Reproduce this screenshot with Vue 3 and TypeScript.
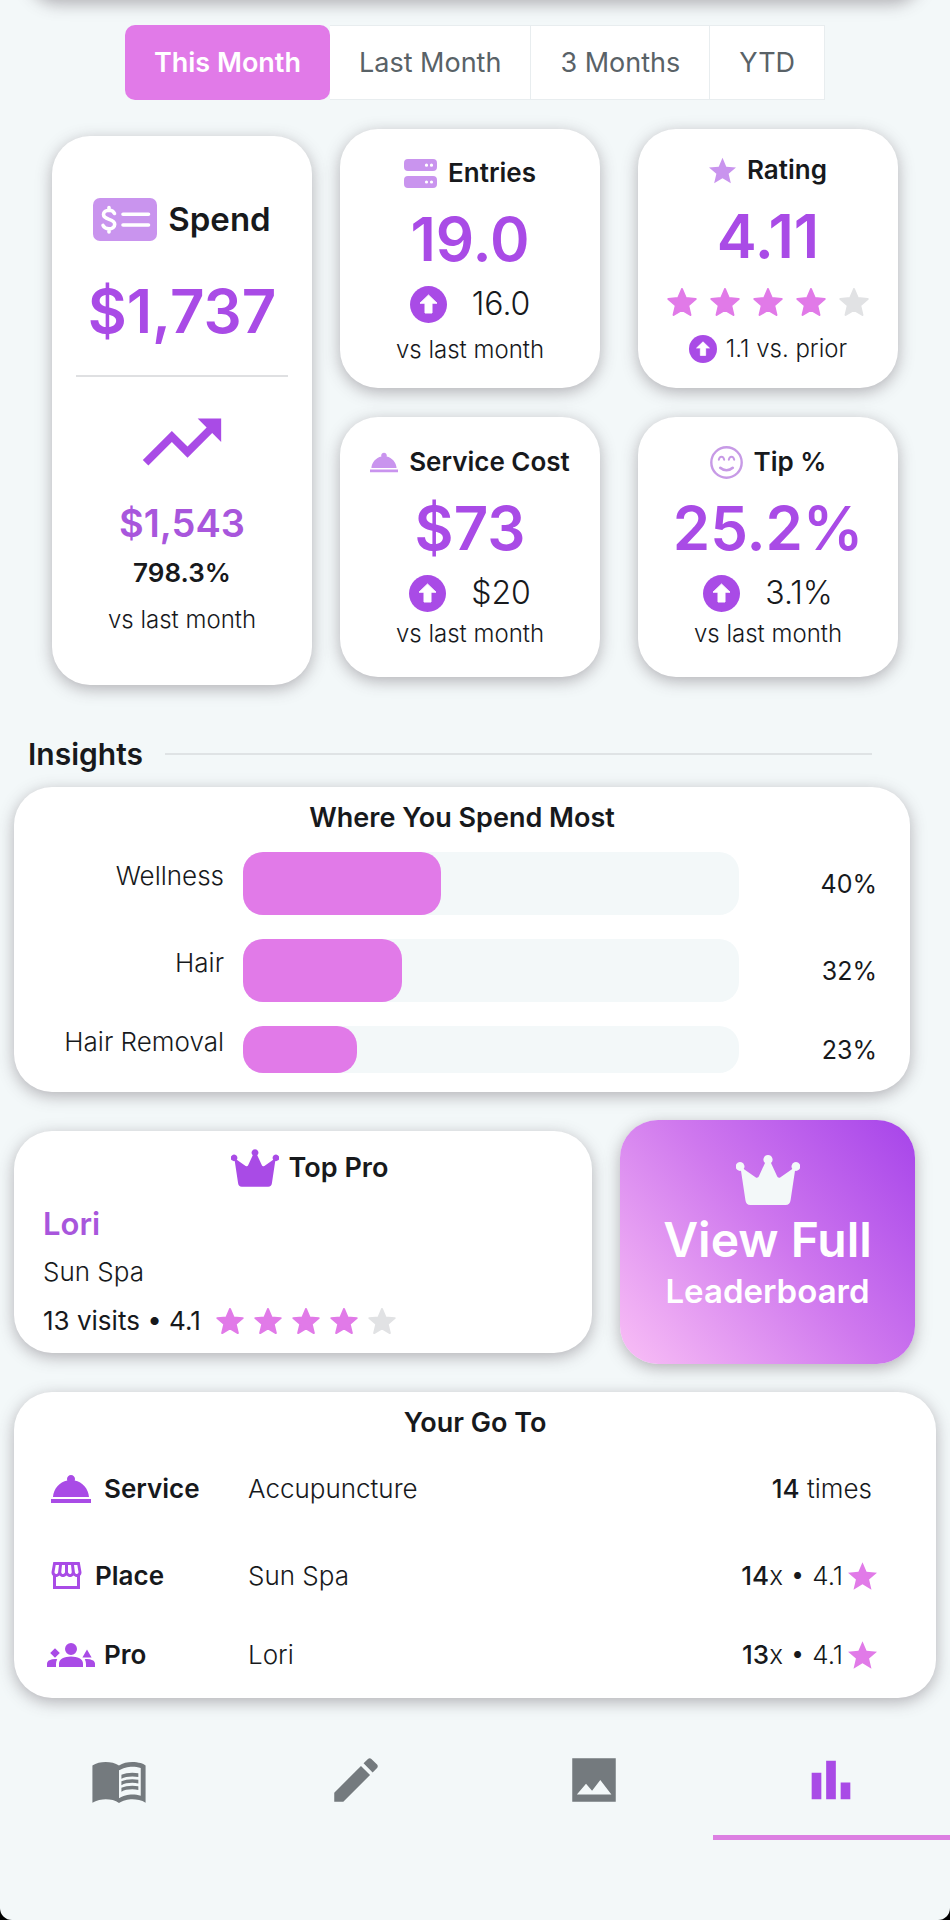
<script setup lang="ts">
import { ref } from 'vue'

interface Glyph {
  box: string
  d: string
}

interface Tile {
  id: string
  title: string
  icon: string
  value: string
  delta: string
  note: string
  stars?: number
}

const cloche =
  'M2 17h20v2H2v-2zm11.84-9.21c.1-.24.16-.51.16-.79 0-1.1-.9-2-2-2s-2 .9-2 2c0 .28.06.55.16.79C6.25 8.6 3.27 11.93 3 16h18c-.27-4.07-3.25-7.4-7.16-8.21z'
const starPath =
  'M12 17.27L18.18 21l-1.64-7.03L22 9.24l-7.19-.61L12 2 9.19 8.63 2 9.24l5.46 4.73L5.82 21z'

const glyphs: Record<string, Glyph> = {
  entries: {
    box: '0 0 33 29',
    d: 'M4 0h25a4 4 0 0 1 4 4v4a4 4 0 0 1-4 4H4a4 4 0 0 1-4-4V4a4 4 0 0 1 4-4zM22.500 4.600a1.600 1.600 0 1 0 0 3.200 1.600 1.600 0 0 0 0-3.200zM27.500 4.600a1.600 1.600 0 1 0 0 3.200 1.600 1.600 0 0 0 0-3.200zM4 17h25a4 4 0 0 1 4 4v4a4 4 0 0 1-4 4H4a4 4 0 0 1-4-4v-4a4 4 0 0 1 4-4zM22.500 21.400a1.600 1.600 0 1 0 0 3.200 1.600 1.600 0 0 0 0-3.200zM27.500 21.400a1.600 1.600 0 1 0 0 3.200 1.600 1.600 0 0 0 0-3.200z',
  },
  rating: { box: '2 2 20 19', d: starPath },
  cost: { box: '2 4.500 20 15', d: cloche },
  service: { box: '0 0 24 24', d: cloche },
  place: {
    box: '-1 -1 26 26',
    d: 'M3.200 3h17.600l1.200 6.800c0 1-.300 1.700-1 2.300V21H3v-8.900c-.700-.600-1-1.300-1-2.300zM4.800 5L4 9.700c0 .8.500 1.300 1.100 1.300.700 0 1.200-.5 1.300-1.200L7 5zM9 5l-.500 4.600c0 .8.500 1.400 1.200 1.400s1.300-.6 1.300-1.300V5zM13 5v4.700c0 .7.600 1.300 1.300 1.300s1.200-.6 1.200-1.400L15 5zM17 5l.600 4.800c.1.700.6 1.200 1.300 1.200.6 0 1.100-.5 1.100-1.300L19.200 5zM5 13v6h14v-6c-.900 0-1.700-.4-2.300-1-.6.600-1.400 1-2.300 1-1 0-1.800-.4-2.400-1-.6.600-1.400 1-2.400 1-.9 0-1.700-.4-2.300-1-.6.600-1.400 1-2.300 1z',
  },
  pro: {
    box: '0 0 24 24',
    d: 'M12 12.750c1.630 0 3.070.390 4.240.900 1.080.480 1.760 1.560 1.760 2.730V18H6v-1.610c0-1.180.680-2.260 1.760-2.730 1.170-.520 2.610-.910 4.240-.910zM12 6a3 3 0 1 1 0 6 3 3 0 0 1 0-6zM4 8.600l2.400 2.400L4 13.400 1.600 11zM20 9.300l2.300 3.900h-4.600zM1.220 14.580C.480 14.900 0 15.620 0 16.430V18h4.500v-1.610c0-.830.230-1.610.630-2.290C4.760 14.040 4.390 14 4 14c-.990 0-1.930.210-2.780.580zM22.780 14.580C21.930 14.210 20.990 14 20 14c-.390 0-.760.040-1.130.100.400.680.630 1.460.630 2.290V18H24v-1.570c0-.810-.480-1.530-1.220-1.850z',
  },
  crown: {
    box: '0 0 64 50',
    d: 'M32 0a4.500 4.500 0 0 1 3 7.900l6 13.200c.7 1.600 2 2.100 3.500 1.100L56.300 14a4.400 4.400 0 1 1 2.700 1.800L54.600 45c-.5 3.400-2 5-5 5H14.400c-3 0-4.500-1.600-5-5L5 15.800A4.400 4.400 0 1 1 7.700 14l11.800 8.200c1.500 1 2.800.5 3.500-1.100l6-13.200A4.500 4.500 0 0 1 32 0z',
  },
  trend: {
    box: '0 0 24 24',
    d: 'M16 6l2.290 2.290-4.880 4.880-4-4L2 16.590 3.410 18l6-6 4 4 6.300-6.290L22 12V6z',
  },
  book: {
    box: '0 0 24 24',
    d: 'M21 5c-1.110-.350-2.330-.500-3.500-.500-1.950 0-4.050.400-5.500 1.500-1.450-1.100-3.550-1.500-5.500-1.500S2.450 4.900 1 6v15.400C2.500 20.450 5.050 20 6.500 20c1.950 0 4.050.400 5.500 1.500 1.350-.850 3.800-1.500 5.500-1.500 1.650 0 4 .400 5.500 1.400V6c-.600-.450-1.250-.750-2-1zm0 13.500c-1.100-.350-2.300-.500-3.500-.500-1.700 0-4.150.650-5.500 1.500V8c1.350-.850 3.800-1.500 5.500-1.500 1.200 0 2.400.150 3.500.500v11.500zM17.500 10.500c.880 0 1.730.090 2.500.260V9.240c-.790-.150-1.640-.240-2.500-.240-1.700 0-3.240.290-4.500.830v1.660c1.130-.640 2.700-.990 4.500-.990zM13 12.490v1.660c1.130-.640 2.700-.990 4.500-.990.880 0 1.730.090 2.500.260V11.900c-.790-.150-1.640-.240-2.500-.240-1.700 0-3.240.300-4.500.830zM17.500 14.330c-1.700 0-3.240.290-4.500.830v1.660c1.130-.640 2.700-.990 4.500-.990.880 0 1.730.090 2.500.260v-1.520c-.790-.160-1.640-.240-2.500-.240z',
  },
  pencil: {
    box: '0 0 24 24',
    d: 'M3 17.250V21h3.750L17.810 9.940l-3.750-3.750L3 17.250zM20.710 7.040c.390-.390.390-1.020 0-1.410l-2.340-2.340c-.390-.390-1.020-.390-1.410 0l-1.830 1.830 3.750 3.750 1.830-1.830z',
  },
  photo: {
    box: '0 0 24 24',
    d: 'M3 3h18v18H3zM4.900 18h14.300L14.600 12l-3.400 4.400-2.500-2.900z',
  },
  chart: { box: '0 0 24 24', d: 'M4 9h4v11H4zM10 4h4v16h-4zM16 13h4v7h-4z' },
}

const periods = ['This Month', 'Last Month', '3 Months', 'YTD']
const period = ref('This Month')

const tiles: Tile[] = [
  { id: 'entries', title: 'Entries', icon: 'entries', value: '19.0', delta: '16.0', note: 'vs last month' },
  { id: 'rating', title: 'Rating', icon: 'rating', value: '4.11', delta: '', note: '1.1 vs. prior', stars: 4 },
  { id: 'cost', title: 'Service Cost', icon: 'cost', value: '$73', delta: '$20', note: 'vs last month' },
  { id: 'tip', title: 'Tip %', icon: 'tip', value: '25.2%', delta: '3.1%', note: 'vs last month' },
]

const spending = [
  { label: 'Wellness', share: 40 },
  { label: 'Hair', share: 32 },
  { label: 'Hair Removal', share: 23 },
]

const favourites = [
  { icon: 'service', label: 'Service', name: 'Accupuncture', count: '14', unit: ' times', rating: '' },
  { icon: 'place', label: 'Place', name: 'Sun Spa', count: '14', unit: 'x', rating: '4.1' },
  { icon: 'pro', label: 'Pro', name: 'Lori', count: '13', unit: 'x', rating: '4.1' },
]

const sections = [
  { id: 'book', label: 'Journal' },
  { id: 'pencil', label: 'New entry' },
  { id: 'photo', label: 'Gallery' },
  { id: 'chart', label: 'Statistics' },
]
</script>

<template>
  <div class="page">
    <div class="previous-card" aria-hidden="true"></div>

    <div class="periods" role="group" aria-label="Period">
      <button
        v-for="p in periods"
        :key="p"
        type="button"
        class="period"
        :class="{ active: p === period }"
        :aria-pressed="p === period"
        @click="period = p"
      >{{ p }}</button>
    </div>

    <main>
      <section class="metrics" aria-label="Summary">
        <article class="card spend">
          <h2 class="tile-title spend-title">
            <svg class="check-icon" viewBox="0 0 64 43" aria-hidden="true">
              <rect width="64" height="43" rx="7" fill="#c994ee" />
              <g fill="none" stroke="#fff" stroke-width="3.600" stroke-linecap="round">
                <path d="M21.500 15.500c-1-2.200-3-3.200-5.500-3.200-3.200 0-5.500 1.600-5.500 4.300 0 6 11.200 3.600 11.200 9.600 0 2.800-2.400 4.600-5.700 4.600-3 0-5-1.100-6-3.400M16 9.500v3M16 31v3M30 16.300h25.500M30 27h25.500" />
              </g>
            </svg>
            Spend
          </h2>
          <p class="value">$1,737</p>
          <hr class="divider" />
          <svg class="trend-icon" :viewBox="glyphs.trend.box" aria-hidden="true">
            <path :d="glyphs.trend.d" />
          </svg>
          <p class="gain">$1,543</p>
          <p class="gain-rate">798.3%</p>
          <p class="note">vs last month</p>
        </article>

        <div class="tiles">
          <article v-for="t in tiles" :key="t.id" class="card tile" :class="t.id">
            <h2 class="tile-title">
              <svg v-if="t.icon === 'tip'" class="title-icon" viewBox="0 0 33 33" aria-hidden="true">
                <g fill="none" stroke="#c79ae6" stroke-linecap="round">
                  <circle cx="16.500" cy="16.500" r="15.200" stroke-width="2.400" />
                  <path stroke-width="2" d="M8.800 13.800c.8-4 4.600-4 5.400 0M18.800 13.800c.8-4 4.600-4 5.400 0" />
                  <path stroke-width="2.600" d="M10.200 21.800c3.600 3.200 9 3.200 12.600 0" />
                </g>
              </svg>
              <svg v-else class="title-icon" :viewBox="glyphs[t.icon].box" aria-hidden="true">
                <path :d="glyphs[t.icon].d" fill-rule="evenodd" />
              </svg>
              {{ t.title }}
            </h2>
            <p class="value">{{ t.value }}</p>
            <div v-if="t.stars" class="stars" role="img" :aria-label="`${t.stars} of 5 stars`">
              <svg v-for="n in 5" :key="n" class="star" :class="{ off: n > t.stars }" viewBox="1 1 22 21">
                <path :d="starPath" />
              </svg>
            </div>
            <p v-if="t.delta" class="delta">
              <svg class="up-icon" viewBox="0 0 37 37" aria-hidden="true">
                <circle cx="18.500" cy="18.500" r="18.500" />
                <path d="M18.500 9L27 17.200h-5V27h-7v-9.800h-5z" />
              </svg>
              {{ t.delta }}
            </p>
            <p class="note">
              <svg v-if="!t.delta" class="up-icon" viewBox="0 0 37 37" aria-hidden="true">
                <circle cx="18.500" cy="18.500" r="18.500" />
                <path d="M18.500 9L27 17.200h-5V27h-7v-9.800h-5z" />
              </svg>
              {{ t.note }}
            </p>
          </article>
        </div>
      </section>

      <div class="section-head">
        <h2>Insights</h2>
        <hr />
      </div>

      <section class="card spending">
        <h3 class="card-title">Where You Spend Most</h3>
        <ul class="bars">
          <li v-for="s in spending" :key="s.label" class="bar-row">
            <span class="bar-label">{{ s.label }}</span>
            <span class="track"><span class="fill" :style="{ width: s.share + '%' }"></span></span>
            <span class="bar-share">{{ s.share }}%</span>
          </li>
        </ul>
      </section>

      <div class="pair">
        <section class="card top-pro">
          <h3 class="card-title pro-title">
            <svg class="crown" :viewBox="glyphs.crown.box" aria-hidden="true">
              <path :d="glyphs.crown.d" />
            </svg>
            Top Pro
          </h3>
          <p class="pro-name">Lori</p>
          <p class="pro-place">Sun Spa</p>
          <div class="pro-stats">
            <span>13 visits • 4.1</span>
            <span class="stars" role="img" aria-label="4 of 5 stars">
              <svg v-for="n in 5" :key="n" class="star" :class="{ off: n > 4 }" viewBox="1 1 22 21">
                <path :d="starPath" />
              </svg>
            </span>
          </div>
        </section>

        <a class="leaderboard" href="#leaderboard">
          <svg class="crown" :viewBox="glyphs.crown.box" aria-hidden="true">
            <path :d="glyphs.crown.d" />
          </svg>
          <span class="lead-top">View Full</span>
          <span class="lead-bottom">Leaderboard</span>
        </a>
      </div>

      <section class="card go-to">
        <h3 id="go-to-title" class="card-title">Your Go To</h3>
        <table aria-labelledby="go-to-title">
          <tbody>
            <tr v-for="f in favourites" :key="f.label">
              <th scope="row">
                <span class="row-label">
                  <svg :class="['row-icon', f.icon]" :viewBox="glyphs[f.icon].box" aria-hidden="true">
                    <path :d="glyphs[f.icon].d" fill-rule="evenodd" />
                  </svg>
                  {{ f.label }}
                </span>
              </th>
              <td>{{ f.name }}</td>
              <td class="count" :class="{ rated: f.rating }">
                <span class="count-line">
                  <span><b>{{ f.count }}</b>{{ f.unit }}<template v-if="f.rating"> • {{ f.rating }}</template></span>
                  <svg v-if="f.rating" class="row-star" viewBox="2 2 20 19" aria-hidden="true">
                    <path :d="starPath" />
                  </svg>
                </span>
              </td>
            </tr>
          </tbody>
        </table>
      </section>
    </main>

    <nav class="tabbar" aria-label="Main">
      <a
        v-for="s in sections"
        :key="s.id"
        :href="'#' + s.id"
        class="tab"
        :class="{ current: s.id === 'chart' }"
        :aria-label="s.label"
      >
        <svg :viewBox="glyphs[s.id].box" aria-hidden="true">
          <path :d="glyphs[s.id].d" fill-rule="evenodd" />
        </svg>
      </a>
    </nav>
  </div>
</template>

<style>
html {
  background: #000;
}
</style>

<style scoped>
.page {
  box-sizing: border-box;
  min-height: 100vh;
  overflow: hidden;
  background: #f3f8f9;
  border-radius: 0 0 12px 12px;
  color: #17191c;
  font-family: Inter, "Liberation Sans", sans-serif;
  font-size: 26px;
  font-weight: 300;
  line-height: 32px;
}

h2,
h3,
p,
ul,
hr {
  margin: 0;
  padding: 0;
}

svg {
  display: block;
  flex: none;
}

.card,
.leaderboard,
.previous-card {
  border-radius: 38px;
  background: #fff;
  box-shadow: 0 4px 16px rgba(70, 60, 70, 0.38);
}

.previous-card {
  height: 60px;
  margin: -60px 28px 25px;
}

.periods {
  display: flex;
  width: fit-content;
  margin: 0 auto;
}

.period {
  box-sizing: border-box;
  height: 75px;
  padding: 0 29px;
  border: 1px solid #e8edef;
  border-left-width: 0;
  background: #fff;
  color: #596267;
  font: 400 27px/34px Inter, "Liberation Sans", sans-serif;
  cursor: pointer;
}

.period.active {
  border: 0;
  border-radius: 10px;
  background: #e17ae8;
  color: #fff;
  font-weight: 600;
}

.metrics {
  display: grid;
  grid-template-columns: 260fr 558fr;
  align-items: start;
  gap: 28px;
  margin: 29px 52px 0;
}

.tiles {
  display: grid;
  grid-template-columns: 1fr 1fr;
  gap: 29px 38px;
}

.spend,
.tile {
  box-sizing: border-box;
  display: flex;
  flex-direction: column;
  align-items: center;
}

.spend {
  margin-top: 7px;
  padding: 61px 24px 50px;
}

.tile-title {
  display: flex;
  align-items: center;
  gap: 11px;
  font-size: 26px;
  font-weight: 600;
  line-height: 34px;
  white-space: nowrap;
}

.title-icon {
  width: 33px;
  height: 33px;
  fill: #c994ee;
}

.rating .title-icon {
  width: 27px;
}

.cost .title-icon {
  width: 28px;
}

.spend-title {
  font-size: 33px;
  line-height: 44px;
}

.check-icon {
  width: 64px;
  height: 43px;
}

.value {
  margin-top: 13px;
  color: #a94be6;
  font-size: 60px;
  font-weight: 600;
  line-height: 72px;
}

.spend .value {
  margin-top: 34px;
}

.divider {
  width: 100%;
  height: 2px;
  margin-top: 28px;
  border: 0;
  background: #dfe0e2;
}

.trend-icon {
  width: 94px;
  height: 94px;
  margin-top: 18px;
  fill: #a94be6;
}

.gain {
  margin-top: 10px;
  color: #a856dc;
  font-size: 38px;
  font-weight: 600;
  line-height: 48px;
}

.gain-rate {
  margin-top: 9px;
  font-size: 26px;
  font-weight: 600;
  line-height: 34px;
}

.note {
  display: flex;
  align-items: center;
  gap: 9px;
  font-size: 24px;
  line-height: 30px;
}

.spend .note {
  margin-top: 15px;
}

.delta {
  display: flex;
  align-items: center;
  gap: 25px;
  margin-top: 10px;
  font-size: 32px;
  line-height: 38px;
}

.up-icon {
  width: 37px;
  height: 37px;
}

.up-icon circle {
  fill: #a94be6;
}

.up-icon path {
  fill: #fff;
  stroke: #fff;
  stroke-width: 1;
  stroke-linejoin: round;
}

.note .up-icon {
  width: 28px;
  height: 28px;
}

.entries {
  padding: 27px 0 23px;
}

.entries .note {
  margin-top: 12px;
}

.rating {
  padding: 24px 0 24px;
}

.rating .note {
  margin-top: 17px;
}

.cost,
.tip {
  padding: 28px 0 28px;
}

.cost .note,
.tip .note {
  margin-top: 7px;
}

.stars {
  display: flex;
  gap: 13px;
}

.tile .stars {
  margin-top: 15px;
}

.star {
  width: 30px;
  height: 30px;
  fill: #e17ae8;
  stroke: #e17ae8;
  stroke-width: 1.5;
  stroke-linejoin: round;
}

.star.off {
  fill: #e1e2e4;
  stroke: #e1e2e4;
}

.section-head {
  display: flex;
  align-items: center;
  gap: 22px;
  margin: 49px 78px 0 28px;
}

.section-head h2 {
  font-size: 30px;
  font-weight: 600;
  line-height: 40px;
}

.section-head hr {
  flex: 1;
  height: 2px;
  border: 0;
  background: #dfe3e5;
}

.card-title {
  font-size: 27px;
  font-weight: 600;
  line-height: 34px;
  text-align: center;
}

.spending {
  margin: 13px 40px 0 14px;
  padding: 14px 0 19px;
}

.bars {
  display: grid;
  gap: 24px;
  margin-top: 17px;
  padding-right: 33px;
  list-style: none;
}

.bar-row {
  display: grid;
  grid-template-columns: 210px 1fr 119px;
  align-items: center;
  gap: 19px;
  height: 63px;
}

.bar-row:last-child {
  height: 47px;
}

.bar-label {
  padding-bottom: 16px;
  text-align: right;
  line-height: 28px;
}

.track {
  align-self: stretch;
  border-radius: 20px;
  background: #f3f8f9;
}

.fill {
  display: block;
  height: 100%;
  border-radius: 20px;
  background: #e17ae8;
}

.bar-share {
  font-size: 25px;
  font-weight: 400;
  text-align: right;
}

.pair {
  display: grid;
  grid-template-columns: 578fr 295fr;
  align-items: center;
  gap: 28px;
  margin: 28px 35px 0 14px;
}

.top-pro {
  padding: 17px 16px 16px 29px;
}

.pro-title {
  display: flex;
  align-items: center;
  justify-content: center;
  gap: 10px;
  line-height: 40px;
}

.pro-title .crown {
  width: 48px;
  height: 38px;
  fill: #a94be6;
}

.pro-name {
  margin-top: 16px;
  color: #a856dc;
  font-size: 31px;
  font-weight: 600;
  line-height: 40px;
}

.pro-place {
  margin-top: 12px;
}

.pro-stats {
  display: flex;
  align-items: center;
  gap: 15px;
  margin-top: 17px;
  font-weight: 400;
}

.pro-stats .stars {
  gap: 10px;
}

.pro-stats .star {
  width: 28px;
  height: 28px;
}

.leaderboard {
  display: flex;
  flex-direction: column;
  align-items: center;
  padding: 35px 0 53px;
  background: linear-gradient(50deg, #f5b8f5 5%, #cf78ee 52%, #a846ea 98%);
  color: #fff;
  font-weight: 600;
  text-decoration: none;
  white-space: nowrap;
}

.leaderboard .crown {
  width: 64px;
  height: 50px;
  fill: #f3f8f9;
}

.lead-top {
  margin-top: 5px;
  font-size: 48px;
  line-height: 60px;
}

.lead-bottom {
  margin-top: 1px;
  font-size: 33px;
  line-height: 40px;
}

.go-to {
  margin: 28px 14px 0;
  padding: 14px 0 8px;
}

table {
  width: 100%;
  margin-top: 5px;
  border-collapse: collapse;
  table-layout: fixed;
}

tr {
  height: 87px;
}

tr:last-child {
  height: 71px;
}

th,
td {
  padding: 0;
  text-align: left;
  vertical-align: middle;
}

th {
  width: 234px;
  font-weight: 600;
}

.row-label {
  display: flex;
  align-items: center;
  gap: 9px;
  padding-left: 33px;
}

.row-icon {
  width: 48px;
  height: 48px;
  fill: #a94be6;
}

.row-icon.place {
  width: 39px;
  height: 39px;
}

.count {
  padding-right: 64px;
}

.count.rated {
  padding-right: 59px;
}

.count-line {
  display: flex;
  align-items: center;
  justify-content: flex-end;
  gap: 5px;
}

.count b {
  font-weight: 500;
}

.row-star {
  width: 29px;
  height: 28px;
  fill: #e17ae8;
}

.tabbar {
  display: grid;
  grid-template-columns: repeat(4, 1fr);
  margin-top: 27px;
}

.tab {
  display: flex;
  justify-content: center;
  padding: 26px 0;
  border-bottom: 5px solid transparent;
}

.tab svg {
  width: 58px;
  height: 58px;
  fill: #747a7e;
}

.tab.current {
  border-color: #dc80e2;
}

.tab.current svg {
  fill: #a94be6;
}
</style>
